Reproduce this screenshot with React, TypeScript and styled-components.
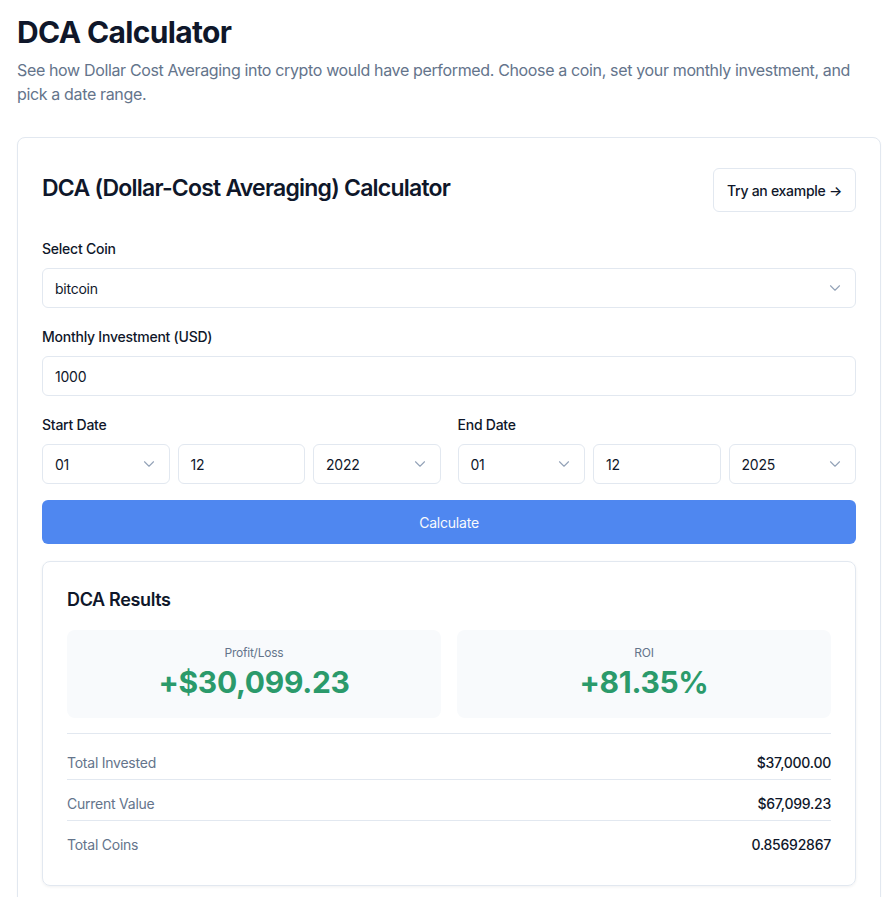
import React from 'react';
import { styled, createGlobalStyle } from 'styled-components';
import { ChevronDown } from 'lucide-react';

const GlobalStyle = createGlobalStyle`
    * {
        box-sizing: border-box;
    }
    body {
        margin: 0;
        background: #ffffff;
        font-family: Inter, 'Noto Sans', sans-serif;
        letter-spacing: -0.015em;
        color: #0f172a;
    }
`;

const Page = styled.div`
    padding: 14px 12px 24px 17px;
`;

const Title = styled.h1`
    margin: 0;
    font-size: 30px;
    line-height: 36px;
    font-weight: 700;
    letter-spacing: -0.022em;
    color: #0f172a;
`;

const Subtitle = styled.p`
    margin: 8px 0 31px;
    font-size: 16px;
    line-height: 24px;
    letter-spacing: -0.022em;
    color: #64748b;
`;

const Card = styled.div`
    border: 1px solid #e2e8f0;
    border-radius: 8px;
    background: #fff;
    box-shadow: 0 1px 2px rgba(15, 23, 42, 0.04);
    padding: 30px 24px 24px;
`;

const CardHeader = styled.div`
    display: flex;
    align-items: center;
    justify-content: space-between;
    margin-bottom: 27px;
`;

const CardTitle = styled.h2`
    margin: 0 0 4px;
    font-size: 23px;
    line-height: 28px;
    font-weight: 600;
    letter-spacing: -0.034em;
`;

const OutlineButton = styled.button`
    height: 44px;
    padding: 0 13px;
    border: 1px solid #e2e8f0;
    border-radius: 6px;
    background: #fff;
    font-family: inherit;
    font-size: 14px;
    font-weight: 500;
    letter-spacing: -0.02em;
    color: #0f172a;
    cursor: pointer;
`;

const Field = styled.div`
    display: flex;
    flex-direction: column;
    gap: 9px;
    margin-bottom: 19px;
`;

const Label = styled.label`
    font-size: 14px;
    line-height: 20px;
    font-weight: 500;
    color: #0f172a;
`;

const Box = styled.div`
    height: 40px;
    display: flex;
    align-items: center;
    justify-content: space-between;
    padding: 0 11px 0 12px;
    border: 1px solid #e2e8f0;
    border-radius: 6px;
    background: #fff;
    font-size: 14px;
    color: #0f172a;
    min-width: 0;

    svg {
        color: #94a3b8;
        flex-shrink: 0;
    }
`;

const DateRow = styled.div`
    display: grid;
    grid-template-columns: 1fr 1fr;
    gap: 17px;
    margin-bottom: 16px;
`;

const DateField = styled(Field)`
    margin-bottom: 0;
`;

const DateParts = styled.div`
    display: grid;
    grid-template-columns: 1fr 1fr 1fr;
    gap: 8px;
`;

const PrimaryButton = styled.button`
    width: 100%;
    height: 44px;
    border: none;
    border-radius: 6px;
    background: #4f87f0;
    color: #f8fafc;
    font-family: inherit;
    font-size: 14px;
    letter-spacing: -0.015em;
    cursor: pointer;
`;

const ResultsCard = styled.div`
    margin-top: 17px;
    border: 1px solid #e2e8f0;
    border-radius: 8px;
    box-shadow: 0 1px 3px rgba(15, 23, 42, 0.06);
    padding: 24px;
`;

const ResultsTitle = styled.h3`
    margin: 0 0 16px;
    font-size: 18px;
    line-height: 28px;
    font-weight: 600;
    letter-spacing: -0.02em;
`;

const StatGrid = styled.div`
    display: grid;
    grid-template-columns: 1fr 1fr;
    gap: 16px;
`;

const StatBox = styled.div`
    background: #f8fafc;
    border-radius: 8px;
    height: 88px;
    display: flex;
    flex-direction: column;
    align-items: center;
    padding-top: 15px;
`;

const StatLabel = styled.div`
    font-size: 12px;
    line-height: 16px;
    color: #64748b;
`;

const StatValue = styled.div<{ $positive: boolean }>`
    margin-top: 3px;
    font-size: 30px;
    line-height: 36px;
    font-weight: 700;
    letter-spacing: -0.01em;
    color: ${({ $positive }) => ($positive ? '#2b9a6b' : '#dc2626')};
`;

const Rows = styled.div`
    margin-top: 15px;
    border-top: 1px solid #e2e8f0;
    padding-top: 5px;
`;

const Row = styled.div`
    display: flex;
    justify-content: space-between;
    font-size: 14px;
    line-height: 20px;
    padding: 14px 0 6px;
    border-bottom: 1px solid #e2e8f0;

    &:last-child {
        border-bottom: none;
    }

    span:first-child {
        color: #64748b;
    }
    span:last-child {
        font-weight: 450;
        color: #0f172a;
    }
`;

function SelectBox({ value }: { value: string }) {
    return (
        <Box>
            <span>{value}</span>
            <ChevronDown size={18} strokeWidth={1.5} />
        </Box>
    );
}

function DateGroup({ label, month, day, year }: { label: string; month: string; day: string; year: string }) {
    return (
        <DateField>
            <Label>{label}</Label>
            <DateParts>
                <SelectBox value={month} />
                <Box>{day}</Box>
                <SelectBox value={year} />
            </DateParts>
        </DateField>
    );
}

const rows = [
    ['Total Invested', '$37,000.00'],
    ['Current Value', '$67,099.23'],
    ['Total Coins', '0.85692867'],
];

export default function App() {
    return (
        <Page>
            <GlobalStyle />
            <Title>DCA Calculator</Title>
            <Subtitle>
                See how Dollar Cost Averaging into crypto would have performed. Choose a coin, set your monthly
                investment, and pick a date range.
            </Subtitle>
            <Card>
                <CardHeader>
                    <CardTitle>DCA (Dollar-Cost Averaging) Calculator</CardTitle>
                    <OutlineButton>Try an example →</OutlineButton>
                </CardHeader>
                <Field>
                    <Label>Select Coin</Label>
                    <SelectBox value="bitcoin" />
                </Field>
                <Field>
                    <Label>Monthly Investment (USD)</Label>
                    <Box>1000</Box>
                </Field>
                <DateRow>
                    <DateGroup label="Start Date" month="01" day="12" year="2022" />
                    <DateGroup label="End Date" month="01" day="12" year="2025" />
                </DateRow>
                <PrimaryButton>Calculate</PrimaryButton>
                <ResultsCard>
                    <ResultsTitle>DCA Results</ResultsTitle>
                    <StatGrid>
                        <StatBox>
                            <StatLabel>Profit/Loss</StatLabel>
                            <StatValue $positive>+$30,099.23</StatValue>
                        </StatBox>
                        <StatBox>
                            <StatLabel>ROI</StatLabel>
                            <StatValue $positive>+81.35%</StatValue>
                        </StatBox>
                    </StatGrid>
                    <Rows>
                        {rows.map(([k, v]) => (
                            <Row key={k}>
                                <span>{k}</span>
                                <span>{v}</span>
                            </Row>
                        ))}
                    </Rows>
                </ResultsCard>
            </Card>
        </Page>
    );
}
